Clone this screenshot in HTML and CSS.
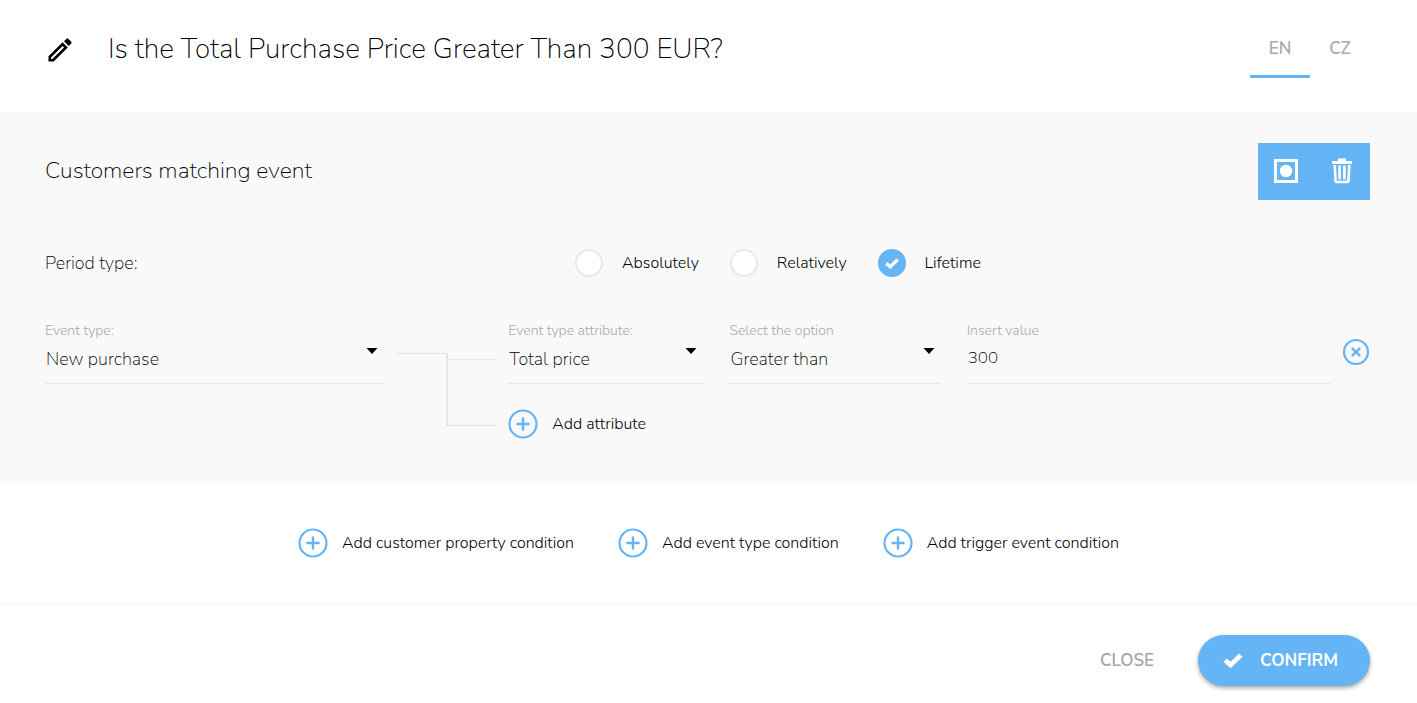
FILE: index.html
```html
<!DOCTYPE html>
<html lang="en">
<head>
<meta charset="utf-8">
<title>Condition editor</title>
<link rel="stylesheet" href="styles.css">
</head>
<body>
<svg class="sprite" aria-hidden="true">
  <symbol id="plus" viewBox="0 0 30 30"><circle cx="15" cy="15" r="13.5" fill="none" stroke="currentColor" stroke-width="2.2"/><path d="M15 8.5v13M8.5 15h13" stroke="currentColor" stroke-width="2.4"/></symbol>
  <symbol id="check" viewBox="0 0 18 14"><path d="M1.700 6.700l5 4.500L16.300 2" fill="none" stroke="currentColor" stroke-width="4.400"/></symbol>
  <symbol id="caret" viewBox="0 0 12 6"><path d="M0.500 0h11L6 6z" fill="currentColor"/></symbol>
</svg>
<form class="editor">
  <header class="header">
    <button class="icon-button edit" type="button" aria-label="Edit name">
      <svg viewBox="0 0 24 24" width="24" height="24"><path fill-rule="evenodd" d="M.500 18.300L14.600 4.200l5.200 5.200L5.700 23.500H.500zM3 19.600v1.400h1.400L16 9.400 14.600 8zM16 3.300L18.600.7q.8-.7 1.600 0l3.100 3.100q.7.800 0 1.600L20.700 8z"/></svg>
    </button>
    <h1 class="title">Is the Total Purchase Price Greater Than 300 EUR?</h1>
    <nav class="languages">
      <button class="language language-active" type="button">EN</button>
      <button class="language" type="button">CZ</button>
    </nav>
  </header>

  <section class="panel">
    <div class="panel-head">
      <h2 class="panel-title">Customers matching event</h2>
      <div class="toolbar">
        <button class="tool" type="button" aria-label="Toggle mask">
          <svg viewBox="0 0 26 26" width="26" height="26"><path d="M2.500 2.500h21v21h-21z" fill="none" stroke="currentColor" stroke-width="3"/><circle cx="13" cy="13" r="6.200" fill="currentColor"/></svg>
        </button>
        <button class="tool" type="button" aria-label="Delete">
          <svg viewBox="0 0 22 26" width="22" height="26"><path d="M1 4.500h20M7 2h8" fill="none" stroke="currentColor" stroke-width="3"/><path d="M3.700 7l.8 15.500q.2 1.500 1.700 1.500h9.600q1.500 0 1.700-1.500L18.300 7M8.600 7.500v14M13.400 7.500v14" fill="none" stroke="currentColor" stroke-width="2.600"/></svg>
        </button>
      </div>
    </div>

    <div class="period" role="radiogroup" aria-labelledby="period-label">
      <span class="period-label" id="period-label">Period type:</span>
      <div class="options">
        <label class="option"><input class="radio" type="radio" name="period"><span class="dot"><svg width="14" height="11"><use href="#check"/></svg></span>Absolutely</label>
        <label class="option"><input class="radio" type="radio" name="period"><span class="dot"><svg width="14" height="11"><use href="#check"/></svg></span>Relatively</label>
        <label class="option"><input class="radio" type="radio" name="period" checked><span class="dot"><svg width="14" height="11"><use href="#check"/></svg></span>Lifetime</label>
      </div>
    </div>

    <div class="rule">
      <div class="field">
        <label class="field-label" for="event">Event type:</label>
        <div class="select-box"><select class="control" id="event"><option>New purchase</option></select><svg class="caret" width="12" height="6"><use href="#caret"/></svg></div>
      </div>
      <div class="connector"><span class="trunk"></span><span class="branches"></span></div>
      <div class="attributes">
        <div class="attribute">
          <div class="fields">
            <div class="field">
              <label class="field-label" for="attribute">Event type attribute:</label>
              <div class="select-box"><select class="control" id="attribute"><option>Total price</option></select><svg class="caret" width="12" height="6"><use href="#caret"/></svg></div>
            </div>
            <div class="field">
              <label class="field-label" for="operator">Select the option</label>
              <div class="select-box"><select class="control" id="operator"><option>Greater than</option></select><svg class="caret" width="12" height="6"><use href="#caret"/></svg></div>
            </div>
            <div class="field">
              <label class="field-label" for="value">Insert value</label>
              <input class="control control-text" id="value" type="text" value="300">
            </div>
          </div>
          <button class="icon-button remove" type="button" aria-label="Remove attribute">
            <svg viewBox="0 0 28 28" width="28" height="28"><circle cx="14" cy="14" r="12" fill="none" stroke="currentColor" stroke-width="2.200"/><path d="M9.800 9.800l8.400 8.400M18.200 9.800l-8.400 8.400" stroke="currentColor" stroke-width="2.400"/></svg>
          </button>
        </div>
        <button class="add" type="button"><svg class="plus" width="30" height="30"><use href="#plus"/></svg>Add attribute</button>
      </div>
    </div>
  </section>

  <section class="conditions">
    <button class="add" type="button"><svg class="plus" width="30" height="30"><use href="#plus"/></svg>Add customer property condition</button>
    <button class="add" type="button"><svg class="plus" width="30" height="30"><use href="#plus"/></svg>Add event type condition</button>
    <button class="add" type="button"><svg class="plus" width="30" height="30"><use href="#plus"/></svg>Add trigger event condition</button>
  </section>

  <footer class="footer">
    <button class="close" type="button">CLOSE</button>
    <button class="confirm" type="submit"><svg width="20" height="15"><use href="#check"/></svg>CONFIRM</button>
  </footer>
</form>
</body>
</html>
```

FILE: styles.css
```css
* { box-sizing: border-box; }
body {
  margin: 0;
  background: #fff;
  color: #000;
  font-family: Nunito, "Open Sans", sans-serif;
  font-size: 16px;
  font-weight: 300;
  line-height: 24px;
}
button, input, select { font: inherit; color: inherit; }
button { border: 0; padding: 0; background: none; cursor: pointer; }
svg { display: block; flex: none; }
h1, h2 { margin: 0; font-weight: 200; }
.sprite { position: absolute; width: 0; height: 0; }

.header {
  display: flex;
  align-items: flex-start;
  height: 112px;
  padding: 20px 47px;
}
.edit { margin: 18px 36px 0 1px; color: #000; }
.title { flex: 1; font-size: 28px; line-height: 58px; }
.languages { display: flex; }
.language {
  width: 60px;
  height: 58px;
  padding-top: 3px;
  border-bottom: 3px solid transparent;
  color: #aaa;
  font-size: 17px;
  font-weight: 600;
}
.language-active { border-color: #64b4f6; }

.panel { padding: 31px 47px 45px 45px; background: #f9f9f9; }
.panel-head { display: flex; justify-content: space-between; }
.panel-title { font-size: 23px; line-height: 56px; }
.toolbar { display: flex; background: #64b4f6; color: #fff; }
.tool { display: grid; place-items: center; width: 56px; height: 57px; padding-bottom: 2px; }

.period { display: flex; align-items: center; margin-top: 49px; }
.period-label { width: 40%; font-size: 18px; font-weight: 200; }
.options { display: flex; gap: 31px; }
.option { position: relative; display: flex; align-items: center; gap: 19px; }
.radio { position: absolute; width: 28px; height: 28px; margin: 0; opacity: 0; }
.dot {
  display: grid;
  place-items: center;
  width: 28px;
  height: 28px;
  border: 2px solid #e8e8e8;
  border-radius: 50%;
  background: #fff;
  color: #fff;
}
.radio:checked + .dot { border-color: #64b4f6; background: #64b4f6; }

.rule {
  display: grid;
  grid-template-columns: 339fr 100px 861fr;
  column-gap: 12px;
  margin-top: 44px;
}
.field-label { display: block; color: #aaa; font-size: 14px; line-height: 20px; }
.select-box { position: relative; }
.control {
  display: block;
  width: 100%;
  height: 43px;
  padding: 0 24px 6px 1px;
  border: 0;
  border-bottom: 1px solid #e6e6e6;
  border-radius: 0;
  background: none;
  appearance: none;
  font-size: 18px;
  font-weight: 200;
}
.control-text { padding-bottom: 9px; font-size: 17px; }
.caret { position: absolute; top: 7px; right: 6px; color: #000; pointer-events: none; }
.connector { display: flex; height: 73px; margin-top: 32px; }
.trunk { width: 50px; border-top: 1px solid #e6e6e6; }
.branches {
  display: flex;
  flex: 1;
  border-bottom: 1px solid #e6e6e6;
  border-left: 2px solid #e6e6e6;
}
.branches::before { content: ""; flex: 1; margin-top: 6px; border-top: 1px solid #e6e6e6; }
.attribute { display: flex; gap: 12px; }
.fields {
  display: grid;
  flex: 1;
  grid-template-columns: 195fr 211fr 363fr;
  column-gap: 26px;
}
.remove { width: 28px; height: 28px; margin-top: 17px; color: #64b4f6; }
.add { display: flex; align-items: center; gap: 14px; }
.attributes > .add { margin-top: 25px; }
.plus { color: #64b4f6; }

.conditions {
  display: flex;
  justify-content: center;
  gap: 44px;
  padding: 44px 0 45px;
  border-bottom: 1px solid #f4f4f4;
}
.footer {
  display: flex;
  align-items: center;
  justify-content: flex-end;
  gap: 44px;
  padding: 31px 47px 17px;
  font-size: 17px;
}
.close { color: #a5a5a5; font-weight: 600; }
.confirm {
  display: flex;
  align-items: center;
  gap: 17px;
  height: 51px;
  padding: 0 32px 0 25px;
  border-radius: 26px;
  background: #64b4f6;
  box-shadow: 0 2px 4px rgba(0, 0, 0, .35);
  color: #fff;
  font-weight: 700;
}
```
